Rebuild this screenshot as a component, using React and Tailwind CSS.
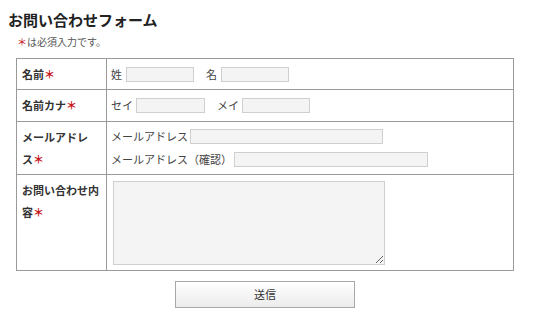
export default function App() {
  const req = <span className="text-[#c8161d]">＊</span>;
  const input = "h-[15px] border border-[#cfcfcf] bg-[#f4f4f4] outline-none";

  return (
    <div
      className="w-[540px] h-[321px] bg-white pl-2 pt-[10px] text-[#333]"
      style={{ fontFamily: '"Noto Sans CJK JP", "Noto Sans", sans-serif' }}
    >
      {/* Title */}
      <h1 className="text-[15px] leading-[20px] font-bold text-[#222]">お問い合わせフォーム</h1>
      <p className="ml-[9px] mt-[4px] text-[10px] leading-[16px] text-[#555]">
        {req}は必須入力です。
      </p>

      {/* Form table */}
      <div className="ml-2 mt-[8px] w-[498px] grid grid-cols-[90px_1fr] border-t border-l border-[#9a9a9a] text-[11px]">
        <div className="h-[31px] border-r border-b border-[#9a9a9a] pl-[5px] pt-[4px] leading-[22px] font-bold">
          名前{req}
        </div>
        <div className="h-[31px] border-r border-b border-[#9a9a9a] pl-[4px] flex items-center text-[#444]">
          <span>姓</span>
          <input className={`${input} ml-[4px] w-[68px]`} />
          <span className="ml-[12px]">名</span>
          <input className={`${input} ml-[4px] w-[68px]`} />
        </div>

        <div className="h-[32px] border-r border-b border-[#9a9a9a] pl-[5px] pt-[4px] leading-[22px] font-bold">
          名前カナ{req}
        </div>
        <div className="h-[32px] border-r border-b border-[#9a9a9a] pl-[4px] flex items-center text-[#444]">
          <span>セイ</span>
          <input className={`${input} ml-[3px] w-[69px]`} />
          <span className="ml-[12px]">メイ</span>
          <input className={`${input} ml-[3px] w-[68px]`} />
        </div>

        <div className="h-[53px] border-r border-b border-[#9a9a9a] pl-[5px] pt-[4px] leading-[22px] font-bold">
          メールアドレ
          <br />ス{req}
        </div>
        <div className="h-[53px] border-r border-b border-[#9a9a9a] pl-[4px] pt-[7px] flex flex-col gap-[8px] text-[#444]">
          <div className="flex items-center">
            <span className="leading-[15px]">メールアドレス</span>
            <input className={`${input} ml-[2px] w-[193px]`} />
          </div>
          <div className="flex items-center">
            <span className="leading-[15px]">メールアドレス（確認）</span>
            <input className={`${input} ml-[2px] w-[194px]`} />
          </div>
        </div>

        <div className="h-[96px] border-r border-b border-[#9a9a9a] pl-[5px] pt-[4px] leading-[22px] font-bold">
          お問い合わせ内
          <br />容{req}
        </div>
        <div className="h-[96px] border-r border-b border-[#9a9a9a] pl-[6px] pt-[6px]">
          <textarea className="block w-[272px] h-[84px] border border-[#cfcfcf] bg-[#f4f4f4] outline-none" />
        </div>
      </div>

      {/* Submit */}
      <div className="w-[514px] flex justify-center mt-[10px]">
        <button className="w-[180px] h-[27px] border border-[#a8a8a8] bg-gradient-to-b from-white to-[#ececec] text-[11px] text-[#333] shadow-[inset_0_1px_0_#fff]">
          送信
        </button>
      </div>
    </div>
  );
}
